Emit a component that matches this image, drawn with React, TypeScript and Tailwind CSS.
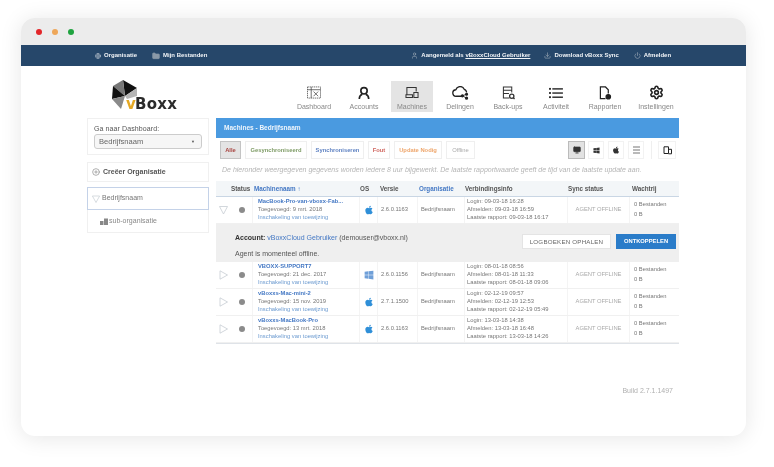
import { Monitor, Settings, User, Globe, Folder, Download, Power, CirclePlus } from 'lucide-react';
import { FaApple, FaWindows } from 'react-icons/fa';

const NAV_ITEMS = [
  { label: 'Dashboard', icon: <DashboardIcon />, className: '' },
  { label: 'Accounts', icon: <AccountIcon />, className: 'ml-[8px]' },
  { label: 'Machines', icon: <MachineIcon />, className: 'ml-[6px] bg-[#e4e4e4]' },
  { label: 'Delingen', icon: <CloudIcon />, className: 'ml-[6px]' },
  { label: 'Back-ups', icon: <BackupIcon />, className: 'ml-[6px]' },
  { label: 'Activiteit', icon: <ListIcon />, className: 'ml-[6px]' },
  { label: 'Rapporten', icon: <ReportIcon />, className: 'ml-[7px]' },
  { label: 'Instellingen', icon: <Settings size={15} strokeWidth={2.6} className="text-[#222]" />, className: 'ml-[9px]' },
];

const FILTERS = [
  { label: 'Alle', className: 'w-[21px] bg-[#e4e4e4] border-[#c4c4c4] font-bold text-[#a8433f]' },
  { label: 'Gesynchroniseerd', className: 'w-[62px] bg-white border-[#efefef] font-bold text-[#7f9c66]' },
  { label: 'Synchroniseren', className: 'w-[53px] bg-white border-[#efefef] font-bold text-[#5f82c2]' },
  { label: 'Fout', className: 'w-[22px] bg-white border-[#efefef] font-bold text-[#d0665f]' },
  { label: 'Update Nodig', className: 'w-[48px] bg-white border-[#efefef] font-bold text-[#eea66c]' },
  { label: 'Offline', className: 'w-[29px] bg-white border-[#efefef] text-[#aaa]' },
];

const COLS = 'grid grid-cols-[16px_20px_108px_18px_40px_47px_103px_62px_49px]';

const MACHINES = [
  {
    name: 'MacBook-Pro-van-vboxx-Fab...',
    added: '9 mrt. 2018',
    os: 'apple',
    version: '2.6.0.1163',
    login: '09-03-18 16:28',
    logout: '09-03-18 16:59',
    report: '09-03-18 16:17',
    open: true,
  },
  {
    name: 'VBOXX-SUPPORT7',
    added: '21 dec. 2017',
    os: 'windows',
    version: '2.6.0.1156',
    login: '08-01-18 08:56',
    logout: '08-01-18 11:33',
    report: '08-01-18 09:06',
  },
  {
    name: 'vBoxxs-Mac-mini-2',
    added: '15 nov. 2019',
    os: 'apple',
    version: '2.7.1.1500',
    login: '02-12-19 09:57',
    logout: '02-12-19 12:53',
    report: '02-12-19 05:49',
  },
  {
    name: 'vBoxxs-MacBook-Pro',
    added: '13 mrt. 2018',
    os: 'apple',
    version: '2.6.0.1163',
    login: '13-03-18 14:38',
    logout: '13-03-18 16:48',
    report: '13-03-18 14:26',
  },
];

function DashboardIcon() {
  return (
    <svg width="14" height="13" viewBox="0 0 15 14" fill="none" stroke="#444" strokeWidth="0.8">
      <rect x="0.5" y="1" width="14" height="12" strokeDasharray="1.5 0.7" />
      <path d="M0.5 4h14M4.500 1v12M7 6l5 5M12 6l-5 5" />
    </svg>
  );
}

function AccountIcon() {
  return (
    <svg width="12" height="14" viewBox="0 0 14 15" fill="none" stroke="#222" strokeWidth="1.9">
      <circle cx="7" cy="5" r="3.7" />
      <path d="M1.5 14.5c0-3 1.8-5 3.5-5.6M12.5 14.5c0-3-1.8-5-3.5-5.6" />
    </svg>
  );
}

function MachineIcon() {
  return (
    <svg width="14" height="13" viewBox="0 0 15 14" fill="none" stroke="#333" strokeWidth="1.1">
      <path d="M2 9V1.500h10V6M1 9.500v3h7v-3zM9.500 7h4.500v5.500H9.500z" />
    </svg>
  );
}

function CloudIcon() {
  return (
    <svg width="17" height="14" viewBox="0 0 18 15" fill="none" stroke="#222" strokeWidth="1.400">
      <path d="M10 11H4.500a3.500 3.500 0 0 1-.5-7 4.800 4.800 0 0 1 9-.5 3.600 3.600 0 0 1 2.500 3.500" />
      <circle cx="11" cy="10.500" r="1" fill="#222" />
      <circle cx="15.500" cy="8.800" r="1" fill="#222" />
      <circle cx="15.500" cy="13" r="1" fill="#222" />
      <path d="M11 10.500l4.500-1.700M11 10.500l4.500 2.500" strokeWidth="0.9" />
    </svg>
  );
}

function BackupIcon() {
  return (
    <svg width="13" height="14" viewBox="0 0 14 15" fill="none" stroke="#333" strokeWidth="1.100">
      <path d="M8 13H1.500V1h9v6M1.500 4.500h9M1.500 8h6" />
      <circle cx="10.500" cy="11" r="2.300" strokeWidth="1.400" />
      <path d="M12.200 12.700l1.300 1.300" strokeWidth="1.400" />
    </svg>
  );
}

function ListIcon() {
  return (
    <svg width="14" height="12" viewBox="0 0 15 13" fill="#222">
      <rect x="0" y="1" width="2" height="2" />
      <rect x="0" y="5.500" width="2" height="2" />
      <rect x="0" y="10" width="2" height="2" />
      <rect x="3.500" y="1.300" width="11.500" height="1.500" />
      <rect x="3.500" y="5.800" width="11.500" height="1.500" />
      <rect x="3.500" y="10.300" width="11.500" height="1.500" />
    </svg>
  );
}

function ReportIcon() {
  return (
    <svg width="13" height="14" viewBox="0 0 14 15" fill="none" stroke="#222" strokeWidth="1.300">
      <path d="M7 13.500H1.500V1H7l3 3v4" />
      <circle cx="10" cy="11.500" r="2.400" fill="#222" />
    </svg>
  );
}

function SubOrgIcon() {
  return (
    <svg width="8" height="7" viewBox="0 0 8 7" fill="#888">
      <rect x="0" y="3" width="3.500" height="4" />
      <rect x="4" y="0.500" width="4" height="6.500" />
    </svg>
  );
}

function CopyDocIcon() {
  return (
    <svg width="9" height="9" viewBox="0 0 9 9" fill="none" stroke="#222" strokeWidth="1">
      <path d="M5.500 7.500H1V0.800h4.500V7.500zM5.500 3.300h3v4.500h-3" />
    </svg>
  );
}

function MenuIcon() {
  return (
    <svg width="7" height="8" viewBox="0 0 7 8" fill="#777">
      <rect x="0" y="0.500" width="7" height="1" />
      <rect x="0" y="3.500" width="7" height="1" />
      <rect x="0" y="6.500" width="7" height="1" />
    </svg>
  );
}

function Logo() {
  return (
    <div className="relative h-[30px] w-[68px]">
      <svg className="absolute left-0 top-0" width="26" height="30" viewBox="0 0 26 30">
        <polygon points="11,0 25,8 13,16" fill="#111" />
        <polygon points="11,0 1,6 13,16" fill="#777" />
        <polygon points="1,6 0,19 13,16" fill="#111" />
        <polygon points="0,19 9,29 13,16" fill="#8a8a8a" />
        <polygon points="13,16 25,8 25,16 15,19" fill="#b5b5b5" />
      </svg>
      <span className="absolute bottom-[-2px] left-[14px] font-['DejaVu_Sans'] text-[15px] font-bold leading-none text-[#e5a823]">
        v
      </span>
      <span className="absolute bottom-[-2px] left-[23px] font-['DejaVu_Sans'] text-[15px] font-bold leading-none tracking-[0.3px] text-[#2b2b2b]">
        Boxx
      </span>
    </div>
  );
}

function TopLink({ icon, children, className }: { icon: React.ReactNode; children: React.ReactNode; className?: string }) {
  return (
    <span className={`flex items-center gap-[3px] ${className ?? ''}`}>
      {icon}
      {children}
    </span>
  );
}

function MachineRow({ machine }: { machine: (typeof MACHINES)[number] }) {
  return (
    <div className={`${COLS} h-[27px] items-center border-b border-[#f0f0f0] text-[5.8px] leading-[7.700px] text-[#777]`}>
      <div className="ml-[3px]">
        <svg width="9" height="10" viewBox="0 0 9 10" fill="none" stroke="#c6cdd3" strokeWidth="0.8">
          {machine.open ? <path d="M0.500 1.500h8L4.500 9z" /> : <path d="M1 0.800v8.400L8.500 5z" />}
        </svg>
      </div>
      <div className="flex justify-center">
        <span className="h-[6px] w-[6px] rounded-full bg-[#8b8b8b]" />
      </div>
      <div className="flex h-full flex-col justify-center border-x border-[#f4f4f4] pl-[5px]">
        <span className="font-bold text-[#4478c4]">{machine.name}</span>
        <span>Toegevoegd: {machine.added}</span>
        <span className="text-[#6b9ad0]">Inschakeling van toewijzing</span>
      </div>
      <div className="flex h-full items-center justify-center border-r border-[#f4f4f4]">
        {machine.os === 'apple' ? (
          <FaApple size={10} className="text-[#2f8fd8]" />
        ) : (
          <FaWindows size={10} className="text-[#6f9fd8]" />
        )}
      </div>
      <div className="flex h-full items-center border-r border-[#f4f4f4] pl-[3px]">{machine.version}</div>
      <div className="flex h-full items-center border-r border-[#f4f4f4] pl-[3px]">Bedrijfsnaam</div>
      <div className="flex h-full flex-col justify-center border-r border-[#f4f4f4] pl-[2px]">
        <span>Login: {machine.login}</span>
        <span>Afmelden: {machine.logout}</span>
        <span>Laatste rapport: {machine.report}</span>
      </div>
      <div className="flex h-full items-center justify-center border-r border-[#f4f4f4] text-[#aaa]">
        AGENT OFFLINE
      </div>
      <div className="flex flex-col pl-[4px]">
        <span>0 Bestanden</span>
        <span className="mt-[2px]">0 B</span>
      </div>
    </div>
  );
}

export default function App() {
  return (
    <div className="h-[467px] w-[774px] overflow-hidden bg-white pl-[21px] pt-[18px] font-['Liberation_Sans',sans-serif]">
      <div className="flex h-[418px] w-[725px] flex-col overflow-hidden rounded-[14px] bg-white shadow-[0_2px_22px_rgba(0,0,0,0.10)]">
        <div className="flex h-[27px] shrink-0 items-center gap-[10px] bg-[#ececec] pl-[15px]">
          <span className="h-[6px] w-[6px] rounded-full bg-[#e3262a]" />
          <span className="h-[6px] w-[6px] rounded-full bg-[#eea75a]" />
          <span className="h-[6px] w-[6px] rounded-full bg-[#1fa33f]" />
        </div>

        <div className="flex h-[21px] shrink-0 items-center bg-[#26476a] pl-[74px] text-[6px] font-bold text-[#f2f5f8] blur-[0.25px]">
          <TopLink icon={<Globe size={6} className="text-[#c8d0d8]" />}>Organisatie</TopLink>
          <TopLink
            className="ml-[15px]"
            icon={<Folder size={8} fill="#8a99a8" className="text-[#8a99a8]" />}
          >
            Mijn Bestanden
          </TopLink>
          <TopLink className="ml-[204px]" icon={<User size={7} className="text-[#a3afbb]" />}>
            <span>
              Aangemeld als <span className="underline">vBoxxCloud Gebruiker</span>
            </span>
          </TopLink>
          <TopLink className="ml-[14px]" icon={<Download size={7} className="text-[#a3afbb]" />}>
            Download vBoxx Sync
          </TopLink>
          <TopLink className="ml-[15px]" icon={<Power size={7} className="text-[#a3afbb]" />}>
            Afmelden
          </TopLink>
        </div>

        <div className="flex h-[52px] shrink-0 blur-[0.25px]">
          <div className="ml-[91px] mt-[14px]">
            <Logo />
          </div>
          <div className="ml-[113px] mt-[15px] flex h-[31px]">
            {NAV_ITEMS.map((item) => (
              <div
                key={item.label}
                className={`flex w-[42px] flex-col items-center pt-[3px] text-[7px] text-[#888] ${item.className}`}
              >
                <div className="flex h-[17px] items-center">{item.icon}</div>
                <span className="mt-[1px] whitespace-nowrap leading-[9px]">{item.label}</span>
              </div>
            ))}
          </div>
        </div>

        <div className="ml-[66px] flex gap-[7px] blur-[0.25px]">
          <div className="flex w-[122px] flex-col">
            <div className="h-[37px] border border-[#f0f0f0] px-[6px] pt-[6px]">
              <div className="text-[7px] leading-[8px] tracking-[0.1px] text-[#555]">Ga naar Dashboard:</div>
              <div className="mt-[1px] flex h-[15px] items-center justify-between rounded-[3px] border border-[#ccc] bg-[#f6f6f6] pl-[4px] pr-[6px] text-[7.600px] text-[#666]">
                Bedrijfsnaam
                <span className="text-[4px] text-[#555]">▼</span>
              </div>
            </div>
            <div className="mt-[7px] flex h-[20px] items-center gap-[3px] border border-[#f0f0f0] pl-[4px] text-[7px] font-bold text-[#555]">
              <CirclePlus size={8} className="text-[#888]" />
              Creëer Organisatie
            </div>
            <div className="mt-[5px] flex h-[23px] items-center gap-[2px] border border-[#c4d2e8] pl-[4px] text-[7px] text-[#777]">
              <svg width="8" height="8" viewBox="0 0 8 8" fill="none" stroke="#c6cdd3" strokeWidth="0.7">
                <path d="M0.400 1h7.200L4 7.500z" />
              </svg>
              Bedrijfsnaam
            </div>
            <div className="flex h-[23px] items-center gap-[1px] border border-t-0 border-[#f0f0f0] pl-[12px] text-[7px] text-[#888]">
              <SubOrgIcon />
              sub-organisatie
            </div>
          </div>

          <div className="w-[463px]">
            <div className="flex h-[20px] items-center bg-[#4a9ae0] pl-[8px] text-[6.500px] font-bold text-[#eef5fc]">
              Machines - Bedrijfsnaam
            </div>
            <div className="mt-[3px] flex h-[18px] items-stretch pl-[4px] pr-[3px]">
              <div className="flex gap-[4px]">
                {FILTERS.map((filter) => (
                  <div
                    key={filter.label}
                    className={`flex items-center justify-center whitespace-nowrap border text-[5.800px] ${filter.className}`}
                  >
                    {filter.label}
                  </div>
                ))}
              </div>
              <div className="ml-auto flex items-stretch text-[#333]">
                <div className="flex w-[17px] items-center justify-center border border-[#bbb] bg-[#e2e2e2]">
                  <Monitor size={8} fill="#333" />
                </div>
                <div className="ml-[3px] flex w-[16px] items-center justify-center border border-[#f2f2f2]">
                  <FaWindows size={7} />
                </div>
                <div className="ml-[4px] flex w-[16px] items-center justify-center border border-[#f2f2f2]">
                  <FaApple size={8} />
                </div>
                <div className="ml-[4px] flex w-[16px] items-center justify-center border border-[#f2f2f2]">
                  <MenuIcon />
                </div>
                <div className="ml-[7px] border-l border-[#efefef]" />
                <div className="ml-[6px] flex w-[18px] items-center justify-center border border-[#f2f2f2]">
                  <CopyDocIcon />
                </div>
              </div>
            </div>
            <div className="flex h-[22px] items-center whitespace-nowrap pl-[6px] text-[7px] italic text-[#b5b5b5]">
              De hieronder weergegeven gegevens worden iedere 8 uur bijgewerkt. De laatste rapportwaarde geeft de tijd van de laatste update aan.
            </div>
            <div className={`${COLS} h-[16px] items-center whitespace-nowrap border-b border-[#c9d6e4] bg-[#f3f6f8] text-[6.300px] font-bold text-[#555]`}>
              <span />
              <span className="-ml-[1px]">Status</span>
              <span className="ml-[2px] text-[#4478c4]">Machinenaam ↑</span>
              <span>OS</span>
              <span className="pl-[2px]">Versie</span>
              <span className="pl-[1px] text-[#4478c4]">Organisatie</span>
              <span>Verbindingsinfo</span>
              <span>Sync status</span>
              <span className="pl-[2px]">Wachtrij</span>
            </div>

            <MachineRow machine={MACHINES[0]} />
            <div className="flex h-[38px] justify-between bg-[#efefef] pl-[19px] pr-[3px] text-[7px] text-[#555]">
              <div className="flex flex-col pt-[10px]">
                <span className="leading-[8px]">
                  <span className="font-bold text-[#333]">Account:</span>{' '}
                  <span className="text-[#4478c4]">vBoxxCloud Gebruiker</span> (demouser@vboxx.nl)
                </span>
                <span className="mt-[8px] leading-[8px]">Agent is momenteel offline.</span>
              </div>
              <div className="flex gap-[5px] pt-[10px]">
                <div className="flex h-[15px] w-[89px] items-center justify-center border border-[#e4e4e4] bg-white text-[6.200px] tracking-[0.2px] text-[#666]">
                  LOGBOEKEN OPHALEN
                </div>
                <div className="flex h-[15px] w-[60px] items-center justify-center bg-[#2a7cc9] text-[5.800px] font-bold text-white">
                  ONTKOPPELEN
                </div>
              </div>
            </div>
            {MACHINES.slice(1).map((machine) => (
              <MachineRow key={machine.name} machine={machine} />
            ))}
            <div className="border-b border-[#dfe3e8]" />
          </div>
        </div>

        <div className="ml-auto mr-[73px] mt-[42px] text-[7px] text-[#b0b0b0] blur-[0.25px]">Build 2.7.1.1497</div>
      </div>
    </div>
  );
}
